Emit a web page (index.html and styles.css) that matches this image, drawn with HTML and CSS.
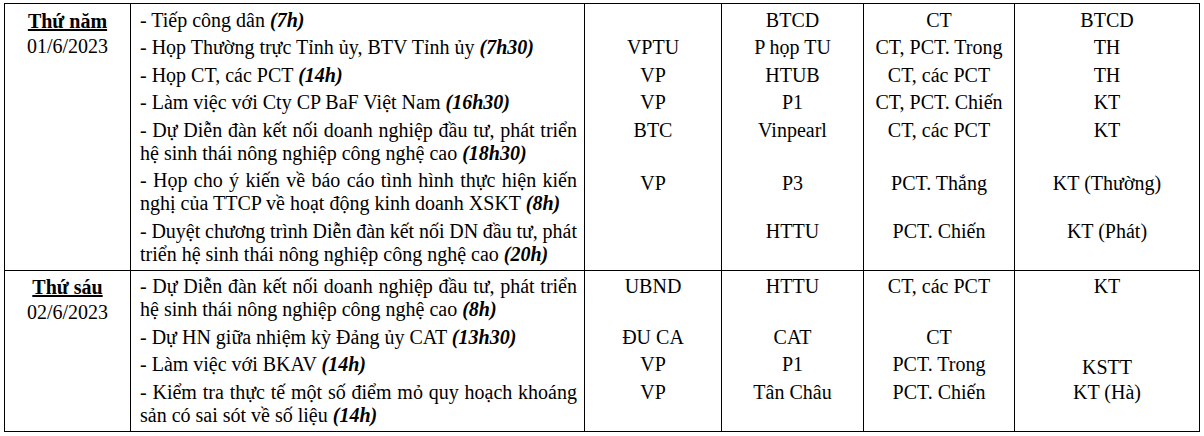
FILE: index.html
```html
<!DOCTYPE html>
<html lang="vi">
<head>
<meta charset="utf-8">
<title>Lịch công tác</title>
<link rel="stylesheet" href="styles.css">
</head>
<body>
<table class="schedule">
  <colgroup>
    <col class="c-day"><col class="c-task"><col class="c-prep"><col class="c-place"><col class="c-lead"><col class="c-follow">
  </colgroup>
  <tbody>
    <tr class="start">
      <td class="day" rowspan="7"><span class="day-name">Thứ năm</span><br>01/6/2023</td>
      <td class="task">- Tiếp công dân <b><i>(7h)</i></b></td>
      <td></td><td>BTCD</td><td>CT</td><td>BTCD</td>
    </tr>
    <tr>
      <td class="task">- Họp Thường trực Tỉnh ủy, BTV Tỉnh ủy <b><i>(7h30)</i></b></td>
      <td>VPTU</td><td>P họp TU</td><td>CT, PCT. Trong</td><td>TH</td>
    </tr>
    <tr>
      <td class="task">- Họp CT, các PCT <b><i>(14h)</i></b></td>
      <td>VP</td><td>HTUB</td><td>CT, các PCT</td><td>TH</td>
    </tr>
    <tr>
      <td class="task">- Làm việc với Cty CP BaF Việt Nam <b><i>(16h30)</i></b></td>
      <td>VP</td><td>P1</td><td>CT, PCT. Chiến</td><td>KT</td>
    </tr>
    <tr>
      <td class="task"><span class="l1">- Dự Diễn đàn kết nối doanh nghiệp đầu tư, phát triển</span><span class="l2">hệ sinh thái nông nghiệp công nghệ cao <b><i>(18h30)</i></b></span></td>
      <td>BTC</td><td>Vinpearl</td><td>CT, các PCT</td><td>KT</td>
    </tr>
    <tr class="shift">
      <td class="task"><span class="l1">- Họp cho ý kiến về báo cáo tình hình thực hiện kiến</span><span class="l2">nghị của TTCP về hoạt động kinh doanh XSKT <b><i>(8h)</i></b></span></td>
      <td>VP</td><td>P3</td><td>PCT. Thắng</td><td>KT (Thường)</td>
    </tr>
    <tr class="end">
      <td class="task"><span class="l1">- Duyệt chương trình Diễn đàn kết nối DN đầu tư, phát</span><span class="l2">triển hệ sinh thái nông nghiệp công nghệ cao <b><i>(20h)</i></b></span></td>
      <td></td><td>HTTU</td><td>PCT. Chiến</td><td>KT (Phát)</td>
    </tr>
    <tr class="start">
      <td class="day" rowspan="4"><span class="day-name">Thứ sáu</span><br>02/6/2023</td>
      <td class="task"><span class="l1">- Dự Diễn đàn kết nối doanh nghiệp đầu tư, phát triển</span><span class="l2">hệ sinh thái nông nghiệp công nghệ cao <b><i>(8h)</i></b></span></td>
      <td>UBND</td><td>HTTU</td><td>CT, các PCT</td><td>KT</td>
    </tr>
    <tr>
      <td class="task">- Dự HN giữa nhiệm kỳ Đảng ủy CAT <b><i>(13h30)</i></b></td>
      <td>ĐU CA</td><td>CAT</td><td>CT</td><td></td>
    </tr>
    <tr class="tight">
      <td class="task">- Làm việc với BKAV <b><i>(14h)</i></b></td>
      <td>VP</td><td>P1</td><td>PCT. Trong</td><td class="low">KSTT</td>
    </tr>
    <tr class="end">
      <td class="task"><span class="l1">- Kiểm tra thực tế một số điểm mỏ quy hoạch khoáng</span><span class="l2">sản có sai sót về số liệu <b><i>(14h)</i></b></span></td>
      <td>VP</td><td>Tân Châu</td><td>PCT. Chiến</td><td>KT (Hà)</td>
    </tr>
  </tbody>
</table>
</body>
</html>
```

FILE: styles.css
```css
html, body {
  margin: 0;
  padding: 0;
  background: #fff;
}

body {
  font-family: "Liberation Serif", "Times New Roman", serif;
  font-size: 20px;
  color: #000;
}

.schedule {
  margin: 3px 0 0 4px;
  width: 1195px;
  table-layout: fixed;
  border-collapse: collapse;
  border-bottom: 1px solid #000;
}

.c-day { width: 126px; }
.c-task { width: 454px; }
.c-prep { width: 137px; }
.c-place { width: 142px; }
.c-lead { width: 151px; }
.c-follow { width: 185px; }

.schedule td {
  border-left: 1px solid #000;
  border-right: 1px solid #000;
  vertical-align: top;
  text-align: center;
  line-height: 23px;
  padding: 2.25px 4px;
}

.schedule tr.start td {
  border-top: 1px solid #000;
  padding-top: 4.5px;
}

.schedule tr.end td {
  padding-bottom: 4px;
}

.schedule tr.tight td {
  padding-bottom: 0;
}

.schedule tr.shift td:not(.task) {
  padding-top: 5px;
}

.schedule td.task {
  text-align: left;
  padding-left: 9px;
  padding-right: 7px;
}

.task .l1,
.task .l2 {
  display: block;
  white-space: nowrap;
}

.task .l1 {
  text-align: justify;
  text-align-last: justify;
  word-spacing: -1px;
}

.schedule td.day {
  line-height: 25px;
  padding-top: 3.5px;
}

.schedule td.low {
  padding-top: 5px;
}

.day-name {
  font-weight: bold;
  text-decoration: underline;
}
```
